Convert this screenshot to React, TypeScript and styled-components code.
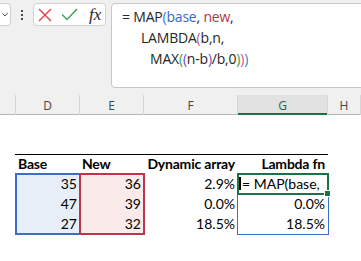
import React from 'react';
import styled, { createGlobalStyle } from 'styled-components';

const COLS = '16px 64px 64px 94px 90px 1fr';

const GlobalStyle = createGlobalStyle`
  html, body { margin: 0; padding: 0; background: #ffffff; }
  body { width: 361px; height: 261px; overflow: hidden; }
`;

const Page = styled.div`
  width: 361px;
  height: 261px;
  overflow: hidden;
  display: flex;
  flex-direction: column;
  background: #ffffff;
`;

const TopBar = styled.div`
  height: 88px;
  background: #f0f0f0;
  display: flex;
  align-items: flex-start;
  padding-top: 3px;
  box-sizing: border-box;
`;

const NameBoxTail = styled.div`
  width: 11px;
  height: 23px;
  box-sizing: border-box;
  background: #ffffff;
  border: 1px solid #cfcfcf;
  border-left: none;
  border-radius: 0 4px 4px 0;
  display: flex;
  align-items: center;
  justify-content: flex-end;
  padding-right: 2px;
`;

const DotsWrap = styled.div`
  width: 22px;
  height: 23px;
  display: flex;
  flex-direction: column;
  align-items: center;
  justify-content: center;
  gap: 2px;
`;

const Dot = styled.span`
  width: 2px;
  height: 2px;
  background: #4a4a4a;
`;

const IconBox = styled.div`
  width: 73px;
  height: 23px;
  box-sizing: border-box;
  background: #ffffff;
  border: 1px solid #d2d2d2;
  border-radius: 4px;
  display: flex;
  align-items: center;
  padding-left: 4px;
  gap: 9px;
`;

const Fx = styled.span`
  font-family: "Liberation Serif", "DejaVu Serif", serif;
  font-style: italic;
  font-size: 17px;
  color: #262626;
  margin-left: 2px;
  line-height: 1;
`;

const FormulaBox = styled.div`
  flex: 1;
  margin-left: 5px;
  margin-right: -10px;
  height: 85px;
  box-sizing: border-box;
  background: #ffffff;
  border: 1px solid #c6c6c6;
  border-radius: 4px 0 0 4px;
  padding: 2px 0 0 10px;
  font-family: "Open Sans", "Noto Sans", sans-serif;
  font-size: 14px;
  letter-spacing: -0.2px;
  color: #262626;
`;

const FLine = styled.div<{ $indent: number }>`
  height: 21px;
  line-height: 21px;
  white-space: pre;
  padding-left: ${(p) => p.$indent}px;
`;

const C = styled.span<{ $c: string }>`
  color: ${(p) => p.$c};
`;

const HeaderRow = styled.div`
  display: grid;
  grid-template-columns: ${COLS};
  height: 27px;
  background: #f0f0f0;
  border-bottom: 1px solid #b5b5b5;
  box-sizing: border-box;
`;

const ColHead = styled.div<{ $active?: boolean }>`
  display: flex;
  align-items: center;
  justify-content: center;
  margin-top: 7px;
  font-family: "Open Sans", "Noto Sans", sans-serif;
  font-size: 12px;
  color: ${(p) => (p.$active ? '#1d6b43' : '#444444')};
  background: ${(p) => (p.$active ? '#e1e1e1' : 'transparent')};
  box-shadow: ${(p) => (p.$active ? 'inset 0 -2px 0 #1e7145' : 'none')};
  border-right: 1px solid #d6d6d6;
  margin-bottom: -1px;
  padding-top: 1px;
`;

const Sheet = styled.div`
  flex: 1;
  padding-top: 39px;
  font-family: Lato, "Open Sans", sans-serif;
  font-size: 14px;
  color: #000000;
`;

const TableGrid = styled.div`
  display: grid;
  grid-template-columns: ${COLS};
  grid-template-rows: 20px 60px;
`;

const THead = styled.div<{ $align: 'left' | 'right' }>`
  border-top: 1px solid #000000;
  margin-left: ${(p) => (p.$align === 'left' ? '-1px' : '0')};
  display: flex;
  align-items: flex-end;
  justify-content: ${(p) => (p.$align === 'left' ? 'flex-start' : 'flex-end')};
  padding: 0 3px 2px 3px;
  font-weight: 700;
  line-height: 17px;
  white-space: nowrap;
  letter-spacing: -0.2px;
`;

const Blank = styled.div``;

const RangeBox = styled.div<{ $border: string; $fill: string; $width: number }>`
  position: relative;
  display: flex;
  flex-direction: column;
  background: ${(p) => p.$fill};
  &::after {
    content: '';
    position: absolute;
    inset: -1px;
    border: ${(p) => p.$width}px solid ${(p) => p.$border};
    pointer-events: none;
  }
`;

const PlainCol = styled.div`
  display: flex;
  flex-direction: column;
`;

const Cell = styled.div`
  height: 20px;
  display: flex;
  align-items: flex-end;
  justify-content: flex-end;
  padding: 0 3px 2px 3px;
  box-sizing: border-box;
  line-height: 17px;
`;

const ActiveCell = styled.div`
  position: relative;
  height: 20px;
  display: flex;
  align-items: flex-end;
  box-sizing: border-box;
  padding: 0 0 2px 4px;
  line-height: 17px;
  white-space: pre;
  z-index: 2;
  &::after {
    content: '';
    position: absolute;
    inset: -1px -1px -1px -1px;
    border: 2px solid #1e7145;
    pointer-events: none;
  }
`;

const Caret = styled.span`
  position: absolute;
  left: 1px;
  top: 3px;
  width: 2px;
  height: 13px;
  background: #000000;
`;

const FillHandle = styled.span`
  position: absolute;
  right: -3px;
  bottom: -3px;
  width: 5px;
  height: 5px;
  background: #1e7145;
  border: 1px solid #ffffff;
  z-index: 3;
`;

const XIcon = () => (
  <svg width="14" height="14" viewBox="0 0 14 14">
    <path d="M1 1 L13 13 M13 1 L1 13" stroke="#e5484d" strokeWidth="1.5" fill="none" />
  </svg>
);

const CheckIcon = () => (
  <svg width="17" height="13" viewBox="0 0 17 13">
    <path d="M1 6.5 L6 11.5 L16 1" stroke="#3fa35a" strokeWidth="1.5" fill="none" />
  </svg>
);

const Chevron = () => (
  <svg width="6" height="5" viewBox="0 0 6 5">
    <path d="M0.5 1.5 L3 4 L6 0.5" stroke="#555" strokeWidth="1" fill="none" />
  </svg>
);

const BLUE = '#3a68c8';
const RED = '#c0304a';

export default function App() {
  return (
    <Page>
      <GlobalStyle />
      <TopBar>
        <NameBoxTail>
          <Chevron />
        </NameBoxTail>
        <DotsWrap>
          <Dot />
          <Dot />
          <Dot />
        </DotsWrap>
        <IconBox>
          <XIcon />
          <CheckIcon />
          <Fx>fx</Fx>
        </IconBox>
        <FormulaBox>
          <FLine $indent={0}>
            = MAP<C $c="#2f7fd0">(</C>
            <C $c={BLUE}>base</C>, <C $c={RED}>new</C>,
          </FLine>
          <FLine $indent={19}>
            LAMBDA<C $c="#d0508a">(</C>b,n,
          </FLine>
          <FLine $indent={28}>
            MAX<C $c="#3a9a4a">(</C>
            <C $c="#7a4ac0">(</C>n-b<C $c="#7a4ac0">)</C>/b,0<C $c="#3a9a4a">)</C>
            <C $c="#d0508a">)</C>
            <C $c="#2f7fd0">)</C>
          </FLine>
        </FormulaBox>
      </TopBar>
      <HeaderRow>
        <ColHead />
        <ColHead>D</ColHead>
        <ColHead>E</ColHead>
        <ColHead>F</ColHead>
        <ColHead $active>G</ColHead>
        <ColHead>H</ColHead>
      </HeaderRow>
      <Sheet>
        <TableGrid>
          <Blank />
          <THead $align="left">Base</THead>
          <THead $align="left">New</THead>
          <THead $align="right">Dynamic array</THead>
          <THead $align="right">Lambda fn</THead>
          <Blank />

          <Blank />
          <RangeBox $border="#3a6ec7" $fill="#e8eef8" $width={2}>
            <Cell>35</Cell>
            <Cell>47</Cell>
            <Cell>27</Cell>
          </RangeBox>
          <RangeBox $border="#c0344a" $fill="#fbeaea" $width={2}>
            <Cell>36</Cell>
            <Cell>39</Cell>
            <Cell>32</Cell>
          </RangeBox>
          <PlainCol>
            <Cell>2.9%</Cell>
            <Cell>0.0%</Cell>
            <Cell>18.5%</Cell>
          </PlainCol>
          <RangeBox $border="#3a6ec7" $fill="#ffffff" $width={1}>
            <ActiveCell>
              <Caret />= MAP(base,
              <FillHandle />
            </ActiveCell>
            <Cell>0.0%</Cell>
            <Cell>18.5%</Cell>
          </RangeBox>
          <Blank />
        </TableGrid>
      </Sheet>
    </Page>
  );
}
